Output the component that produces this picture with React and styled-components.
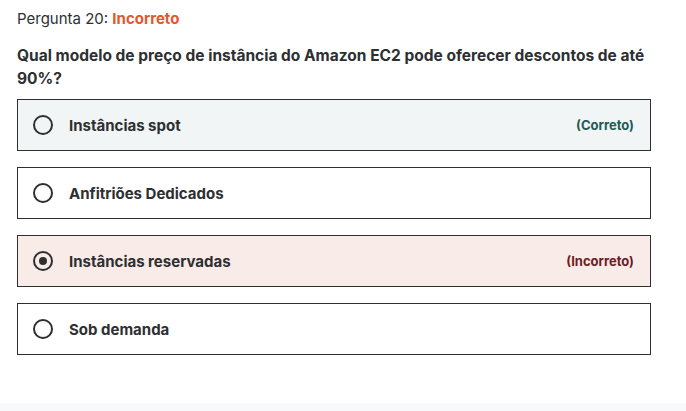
import styled, { createGlobalStyle } from "styled-components";

const GlobalStyle = createGlobalStyle`
  body {
    margin: 0;
    background: #fff;
    font-family: "Inter", "Noto Sans", sans-serif;
    color: #2d2f31;
  }
`;

const answers = [
  { label: "Instâncias spot", status: "correct" },
  { label: "Anfitriões Dedicados" },
  { label: "Instâncias reservadas", status: "incorrect", selected: true },
  { label: "Sob demanda" },
];

function App() {
  return (
    <>
      <GlobalStyle />
      <Page>
        <Title>
          Pergunta 20: <Result>Incorreto</Result>
        </Title>
        <Question>
          Qual modelo de preço de instância do Amazon EC2 pode oferecer descontos de até 90%?
        </Question>
        <AnswerList>
          {answers.map((a) => (
            <Answer key={a.label} status={a.status}>
              <Radio selected={a.selected} />
              <Label>{a.label}</Label>
              {a.status === "correct" && <Tag status="correct">(Correto)</Tag>}
              {a.status === "incorrect" && <Tag status="incorrect">(Incorreto)</Tag>}
            </Answer>
          ))}
        </AnswerList>
      </Page>
      <Footer />
    </>
  );
}

export default App;

const Page = styled.main`
  padding: 9px 35px 0 17px;
  height: 403px;
  box-sizing: border-box;
`;

const Title = styled.div`
  font-size: 15px;
  line-height: 20px;
  font-weight: 400;
`;

const Result = styled.span`
  color: #e2582e;
  font-weight: 700;
`;

const Question = styled.div`
  margin-top: 15px;
  font-size: 15.5px;
  line-height: 23px;
  font-weight: 700;
`;

const AnswerList = styled.div`
  margin-top: 9px;
  display: flex;
  flex-direction: column;
  gap: 16px;
`;

const Answer = styled.div`
  display: flex;
  align-items: center;
  height: 52px;
  box-sizing: border-box;
  padding: 0 16px 0 15px;
  border: 1px solid #2d2f31;
  background: ${(p) =>
    p.status === "correct" ? "#f2f5f5" : p.status === "incorrect" ? "#f9ebe8" : "#fff"};
`;

const Radio = styled.span`
  width: 20px;
  height: 20px;
  border: 2px solid #2d2f31;
  border-radius: 50%;
  box-sizing: border-box;
  flex-shrink: 0;
  display: flex;
  align-items: center;
  justify-content: center;

  &::after {
    content: "";
    display: ${(p) => (p.selected ? "block" : "none")};
    width: 8px;
    height: 8px;
    border-radius: 50%;
    background: #2d2f31;
  }
`;

const Label = styled.span`
  margin-left: 16px;
  flex: 1;
  font-size: 15px;
  font-weight: 700;
`;

const Tag = styled.span`
  font-size: 13px;
  font-weight: 700;
  color: ${(p) => (p.status === "correct" ? "#1e5b56" : "#6d1d24")};
`;

const Footer = styled.div`
  height: 8px;
  background: #f7f9fa;
`;
